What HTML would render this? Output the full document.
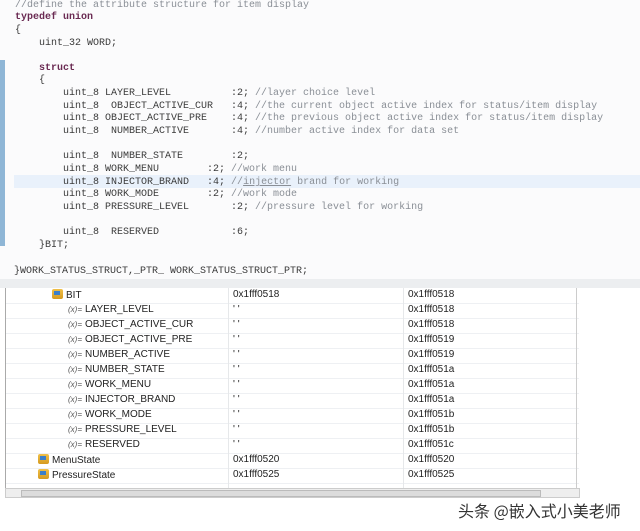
<!DOCTYPE html>
<html><head><meta charset="utf-8"><style>
body{margin:0;width:640px;height:531px;overflow:hidden;background:#fff;position:relative;font-family:"Liberation Sans",sans-serif}
#code{position:absolute;left:0;top:0;width:640px;height:279px;background:#fbfbfc}
.l{position:absolute;left:15px;font:10px/12px "Liberation Mono",monospace;white-space:pre;color:#3a3a3a;margin-top:3px}
.c{color:#8a8f96}
.k{color:#6a2a52;font-weight:bold}
.hl{position:absolute;left:14px;top:175px;width:626px;height:13px;background:#e9f1fb}
.bar{position:absolute;left:0;top:60px;width:5px;height:186px;background:#8fb6d6}
#sep{position:absolute;left:0;top:279px;width:640px;height:9px;background:#eceef0}
#tbl{position:absolute;left:5px;top:288px;width:573px;height:200px;border-left:1px solid #aaa;background:#fff}
.r{position:absolute;left:0;width:573px;height:15px;border-bottom:1px solid #eef0f3;font-size:10px;color:#222}
.r span{position:absolute;top:1px}
.v{left:227px}.a{left:402px}
.cl{position:absolute;top:288px;width:1px;height:200px;background:#e6e8ea}
.ico{display:inline-block;width:11px;height:10px;background:linear-gradient(#f0c048,#d59a20);border-radius:2px;margin-right:3px;vertical-align:-1px;position:relative}
.ico:after{content:"";position:absolute;left:2px;top:2px;width:6px;height:4px;background:#3b7fc9}
.x{font-style:italic;font-size:8px;color:#555;margin-right:3px}
#hs{position:absolute;left:5px;top:488px;width:575px;height:10px;background:#eee;border:1px solid #ccc;box-sizing:border-box}
#hs div{position:absolute;left:15px;top:1px;width:520px;height:7px;background:#dcdcdc;border:1px solid #bbb;box-sizing:border-box}
#vs{position:absolute;left:576px;top:288px;width:4px;height:200px;border-left:1px solid #ccc}
#wm{position:absolute;left:458px;top:498px;font:16px "Noto Sans CJK SC",sans-serif;color:#333}
</style></head><body>
<div id="code">
<div class="bar"></div>
<div class="hl"></div>
<div class="l c" style="top:-3px">//define the attribute structure for item display</div>
<div class="l k" style="top:9px">typedef union</div>
<div class="l" style="top:22px">{</div>
<div class="l" style="top:35px">    uint_32 WORD;</div>
<div class="l k" style="top:60px">    struct</div>
<div class="l" style="top:72px">    {</div>
<div class="l" style="top:85px">        uint_8 LAYER_LEVEL          :2; <span class="c">//layer choice level</span></div>
<div class="l" style="top:98px">        uint_8  OBJECT_ACTIVE_CUR   :4; <span class="c">//the current object active index for status/item display</span></div>
<div class="l" style="top:110px">        uint_8 OBJECT_ACTIVE_PRE    :4; <span class="c">//the previous object active index for status/item display</span></div>
<div class="l" style="top:123px">        uint_8  NUMBER_ACTIVE       :4; <span class="c">//number active index for data set</span></div>
<div class="l" style="top:148px">        uint_8  NUMBER_STATE        :2;</div>
<div class="l" style="top:161px">        uint_8 WORK_MENU        :2; <span class="c">//work menu</span></div>
<div class="l" style="top:174px">        uint_8 INJECTOR_BRAND   :4; <span class="c">//<u>injector</u> brand for working</span></div>
<div class="l" style="top:186px">        uint_8 WORK_MODE        :2; <span class="c">//work mode</span></div>
<div class="l" style="top:199px">        uint_8 PRESSURE_LEVEL       :2; <span class="c">//pressure level for working</span></div>
<div class="l" style="top:224px">        uint_8  RESERVED            :6;</div>
<div class="l" style="top:237px">    }BIT;</div>
<div class="l" style="top:263px;left:14px">}WORK_STATUS_STRUCT,_PTR_ WORK_STATUS_STRUCT_PTR;</div>
</div>
<div id="sep"></div>
<div id="tbl">
<div class="r" style="top:0"><span style="left:46px"><i class="ico"></i>BIT</span><span class="v">0x1fff0518</span><span class="a">0x1fff0518</span></div>
<div class="r" style="top:15px"><span style="left:62px"><i class="x">(x)=</i>LAYER_LEVEL</span><span class="v">' '</span><span class="a">0x1fff0518</span></div>
<div class="r" style="top:30px"><span style="left:62px"><i class="x">(x)=</i>OBJECT_ACTIVE_CUR</span><span class="v">' '</span><span class="a">0x1fff0518</span></div>
<div class="r" style="top:45px"><span style="left:62px"><i class="x">(x)=</i>OBJECT_ACTIVE_PRE</span><span class="v">' '</span><span class="a">0x1fff0519</span></div>
<div class="r" style="top:60px"><span style="left:62px"><i class="x">(x)=</i>NUMBER_ACTIVE</span><span class="v">' '</span><span class="a">0x1fff0519</span></div>
<div class="r" style="top:75px"><span style="left:62px"><i class="x">(x)=</i>NUMBER_STATE</span><span class="v">' '</span><span class="a">0x1fff051a</span></div>
<div class="r" style="top:90px"><span style="left:62px"><i class="x">(x)=</i>WORK_MENU</span><span class="v">' '</span><span class="a">0x1fff051a</span></div>
<div class="r" style="top:105px"><span style="left:62px"><i class="x">(x)=</i>INJECTOR_BRAND</span><span class="v">' '</span><span class="a">0x1fff051a</span></div>
<div class="r" style="top:120px"><span style="left:62px"><i class="x">(x)=</i>WORK_MODE</span><span class="v">' '</span><span class="a">0x1fff051b</span></div>
<div class="r" style="top:135px"><span style="left:62px"><i class="x">(x)=</i>PRESSURE_LEVEL</span><span class="v">' '</span><span class="a">0x1fff051b</span></div>
<div class="r" style="top:150px"><span style="left:62px"><i class="x">(x)=</i>RESERVED</span><span class="v">' '</span><span class="a">0x1fff051c</span></div>
<div class="r" style="top:165px"><span style="left:32px"><i class="ico"></i>MenuState</span><span class="v">0x1fff0520</span><span class="a">0x1fff0520</span></div>
<div class="r" style="top:180px"><span style="left:32px"><i class="ico"></i>PressureState</span><span class="v">0x1fff0525</span><span class="a">0x1fff0525</span></div>
</div>
<div class="cl" style="left:228px"></div>
<div class="cl" style="left:403px"></div>
<div id="vs"></div>
<div id="hs"><div></div></div>
<div id="wm">头条 @嵌入式小美老师</div>
</body></html>
